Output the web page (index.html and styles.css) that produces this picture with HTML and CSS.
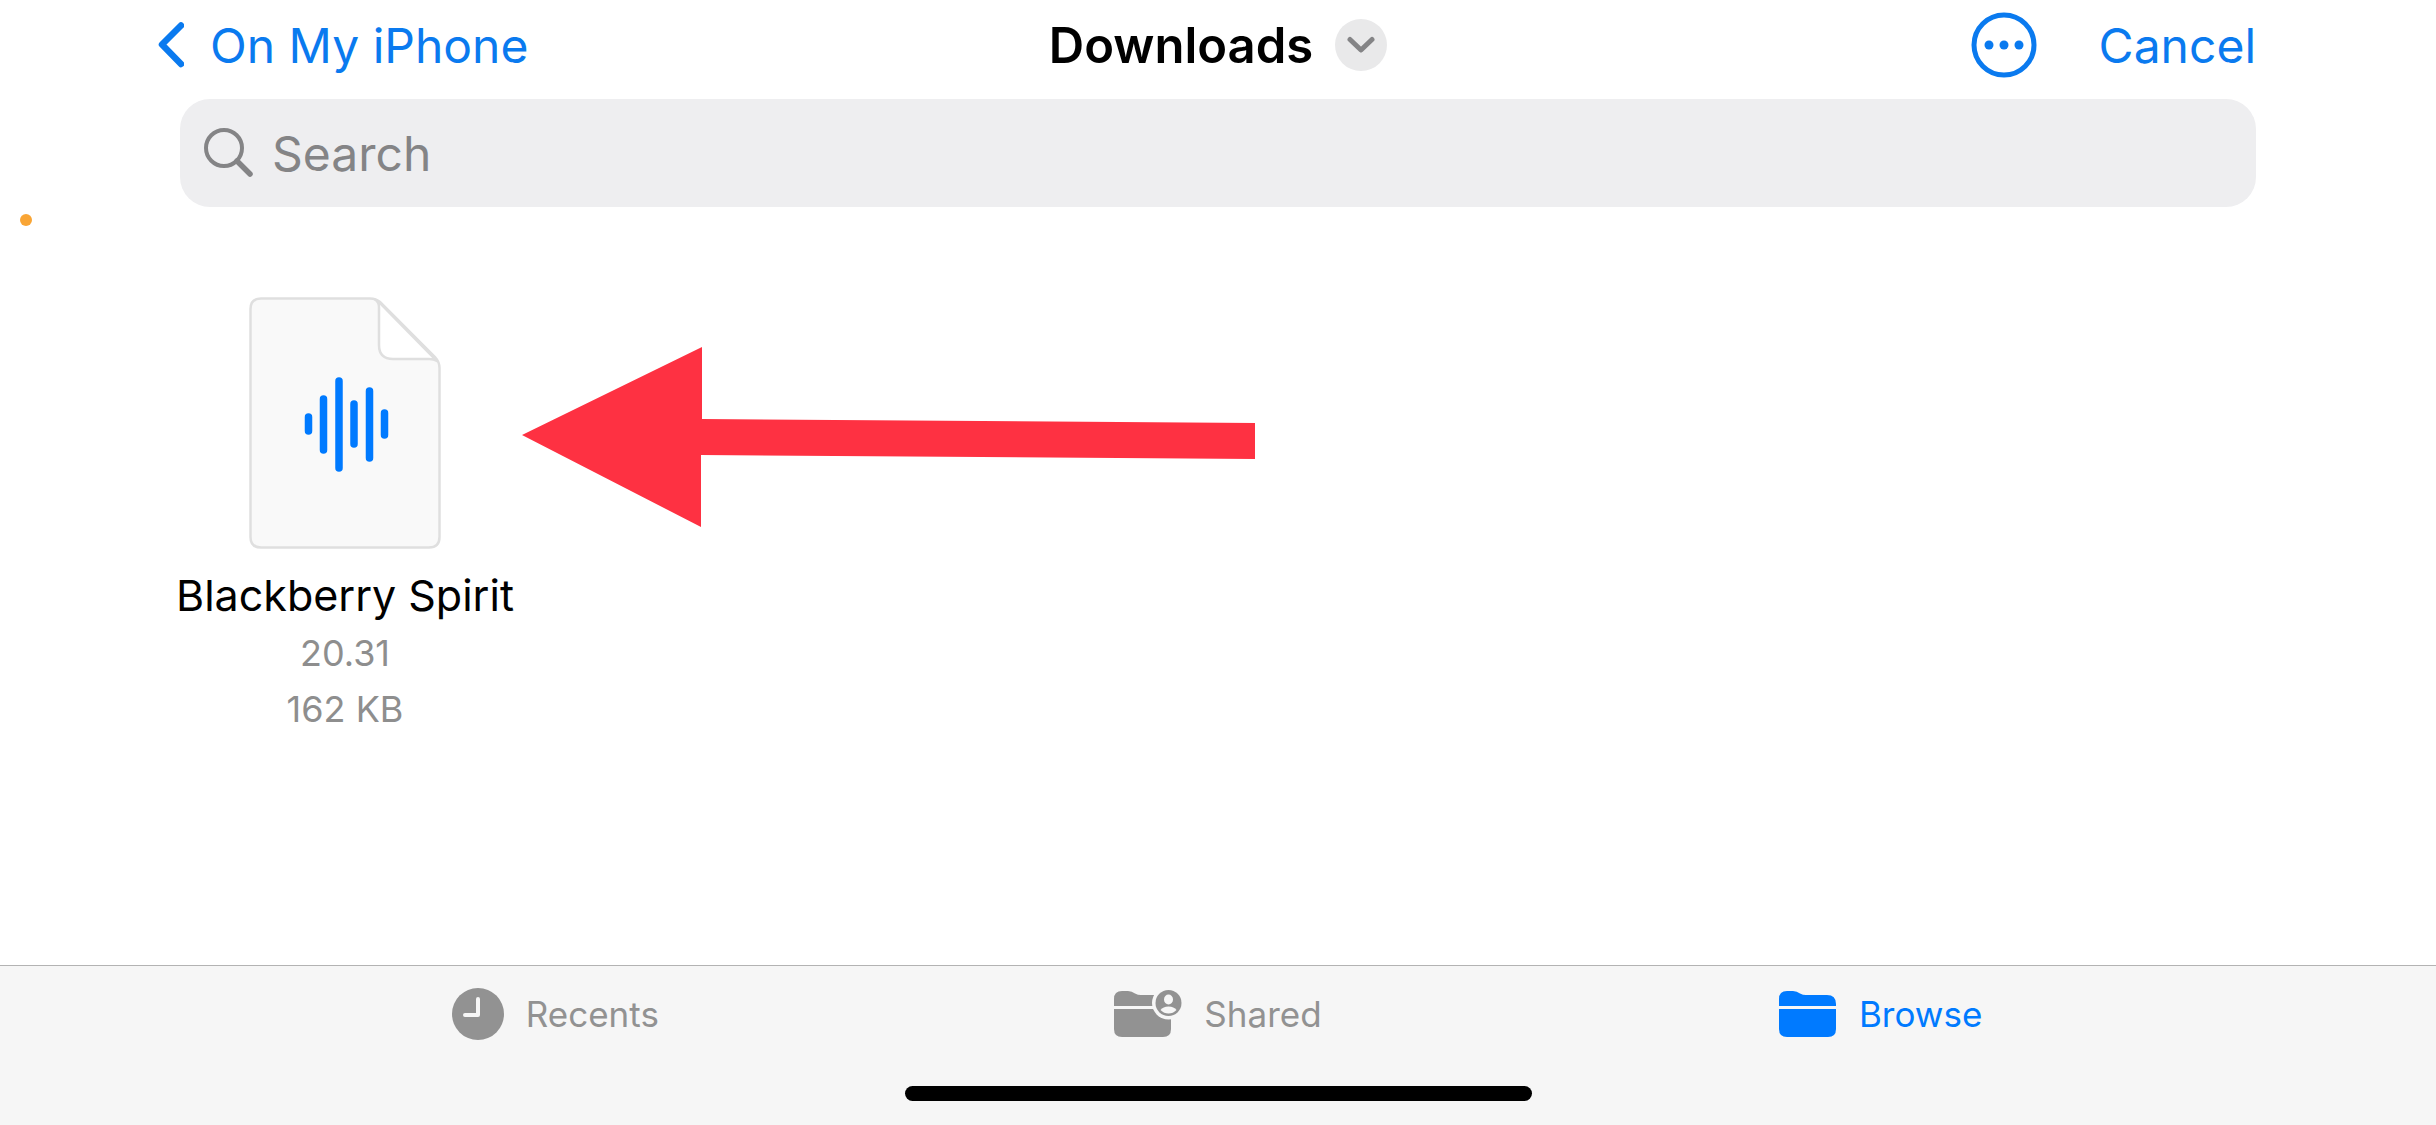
FILE: index.html
```html
<!DOCTYPE html>
<html lang="en">
<head>
    <meta charset="UTF-8">
    <meta name="viewport" content="width=device-width, initial-scale=1.0">
    <title>Downloads</title>
    <link rel="stylesheet" href="styles.css">
</head>
<body>
    <header class="nav-bar">
        <a class="back" href="#">
            <svg width="26" height="46" viewBox="0 0 26 46" aria-hidden="true">
                <path d="M23 3.500L4 22.500L23 42" fill="none" stroke="currentColor" stroke-width="6.500" stroke-linecap="round" stroke-linejoin="round"/>
            </svg>
            <span>On My iPhone</span>
        </a>
        <div class="title-group">
            <h1>Downloads</h1>
            <button class="title-menu" type="button" aria-label="Folder options">
                <svg width="28" height="18" viewBox="0 0 28 18" aria-hidden="true">
                    <path d="M3 3.500L14 14L25 3.500" fill="none" stroke="currentColor" stroke-width="5" stroke-linecap="round" stroke-linejoin="round"/>
                </svg>
            </button>
        </div>
        <div class="actions">
            <button class="more" type="button" aria-label="More">
                <svg width="66" height="66" viewBox="0 0 66 66" aria-hidden="true">
                    <circle cx="33" cy="33" r="30" fill="none" stroke="currentColor" stroke-width="5"/>
                    <circle cx="18" cy="33" r="4.500" fill="currentColor"/>
                    <circle cx="33" cy="33" r="4.500" fill="currentColor"/>
                    <circle cx="48" cy="33" r="4.500" fill="currentColor"/>
                </svg>
            </button>
            <button class="cancel" type="button">Cancel</button>
        </div>
    </header>

    <form class="search">
        <label for="search" aria-label="Search">
            <svg width="50" height="50" viewBox="0 0 50 50" aria-hidden="true">
                <circle cx="20" cy="20" r="18" fill="none" stroke="currentColor" stroke-width="4"/>
                <path d="M33 33L46 46" stroke="currentColor" stroke-width="5.500" stroke-linecap="round"/>
            </svg>
        </label>
        <input type="text" id="search" name="search" placeholder="Search">
    </form>

    <main class="files">
        <a class="file" href="#">
            <svg width="192" height="252" viewBox="0 0 192 252" aria-hidden="true">
                <path d="M12 1.500H121Q127 1.500 131 5L186 60Q190.500 65 190.500 71V240Q190.500 250.500 180 250.500H12Q1.500 250.500 1.500 240V12Q1.500 1.500 12 1.500Z" fill="#f9f9f9" stroke="#dfdfdf" stroke-width="2.500"/>
                <path d="M126 2.500Q130 5 130 10V48Q130 62 144 62H180Q185 62 188 64L131 6Z" fill="#fff" stroke="#dfdfdf" stroke-width="2.500" stroke-linejoin="round"/>
                <path d="M59.500 120V134M74.500 102V153M90 84V171M105 107V147M120.500 94V161M135.500 116V138" stroke="#007aff" stroke-width="7.500" stroke-linecap="round"/>
            </svg>
            <span class="file-name">Blackberry Spirit</span>
            <span class="file-meta">20.31</span>
            <span class="file-meta">162 KB</span>
        </a>
        <svg class="arrow" width="736" height="182" viewBox="0 0 736 182" aria-hidden="true">
            <path d="M2 89L182 1V73L735 77V113L181 109V181Z" fill="#fe3142"/>
        </svg>
    </main>

    <!-- Recording indicator -->
    <span class="mic-dot"></span>

    <footer class="tab-bar">
        <nav class="tabs">
            <a class="tab" href="#">
                <svg width="52" height="52" viewBox="0 0 52 52" aria-hidden="true">
                    <circle cx="26" cy="26" r="26" fill="currentColor"/>
                    <path d="M26 11V27H13" fill="none" stroke="#f6f6f6" stroke-width="4" stroke-linecap="round" stroke-linejoin="round"/>
                </svg>
                <span>Recents</span>
            </a>
            <a class="tab" href="#">
                <svg width="68" height="48" viewBox="0 0 68 48" aria-hidden="true">
                    <path d="M0 16V9Q0 1 8 1H14Q18 1 21 3.500Q24 5 27 5H48Q57 5 57 14V16Z" fill="currentColor"/>
                    <path d="M0 19H57V39Q57 47 49 47H8Q0 47 0 39Z" fill="currentColor"/>
                    <circle cx="54.500" cy="13" r="16.500" fill="#f6f6f6"/>
                    <circle cx="54.500" cy="13" r="13" fill="currentColor"/>
                    <ellipse cx="54.500" cy="9.500" rx="4.500" ry="5" fill="#f6f6f6"/>
                    <path d="M46.500 20Q49 16.500 54.500 16.500Q60 16.500 62.500 20Q59 23.500 54.500 23.500Q50 23.500 46.500 20Z" fill="#f6f6f6"/>
                </svg>
                <span>Shared</span>
            </a>
            <a class="tab active" href="#">
                <svg width="58" height="48" viewBox="0 0 58 48" aria-hidden="true">
                    <path d="M0 16V9Q0 1 8 1H14Q18 1 21 3.500Q24 5 27 5H48Q57 5 57 14V16Z" fill="currentColor"/>
                    <path d="M0 19H57V39Q57 47 49 47H8Q0 47 0 39Z" fill="currentColor"/>
                </svg>
                <span>Browse</span>
            </a>
        </nav>
        <div class="home-indicator"></div>
    </footer>
</body>
</html>
```

FILE: styles.css
```css
* {
    box-sizing: border-box;
}
body {
    display: flex;
    flex-direction: column;
    min-height: 100vh;
    margin: 0;
    position: relative;
    background-color: #fff;
    font-family: Inter, "Liberation Sans", sans-serif;
}
a {
    color: inherit;
    text-decoration: none;
}
button {
    padding: 0;
    border: none;
    background: none;
    color: inherit;
    font: inherit;
    cursor: pointer;
}
svg {
    display: block;
    flex: none;
}
.nav-bar {
    display: grid;
    grid-template-columns: 1fr auto 1fr;
    align-items: center;
    height: 90px;
    padding: 0 158px;
    color: #0a7aef;
    font-size: 48px;
}
.back {
    display: flex;
    align-items: center;
    gap: 26px;
}
.title-group {
    display: flex;
    align-items: center;
    gap: 22px;
}
h1 {
    margin: 0;
    color: #000;
    font-size: 49px;
    font-weight: 600;
}
.title-menu {
    display: flex;
    align-items: center;
    justify-content: center;
    width: 52px;
    height: 52px;
    border-radius: 50%;
    background-color: #e9e9ea;
    color: #848486;
}
.actions {
    display: flex;
    align-items: center;
    justify-content: flex-end;
    gap: 62px;
    padding-right: 22px;
}
.search {
    display: flex;
    align-items: center;
    gap: 18px;
    height: 108px;
    margin: 9px 180px 0;
    padding: 0 24px;
    border-radius: 30px;
    background-color: #eeeef0;
    color: #848486;
}
.search input {
    flex: 1;
    padding: 0;
    border: none;
    outline: none;
    background: none;
    color: #000;
    font-family: inherit;
    font-size: 48px;
}
.search input::placeholder {
    color: #848486;
    opacity: 1;
}
.files {
    flex: 1;
    position: relative;
    padding: 90px 173px;
}
.file {
    display: inline-flex;
    flex-direction: column;
    align-items: center;
    width: 344px;
    white-space: nowrap;
}
.file-name {
    margin-top: 16px;
    color: #000;
    font-size: 43px;
    line-height: 60px;
}
.file-meta {
    color: #8e8e8e;
    font-size: 36px;
    line-height: 56px;
}
.arrow {
    position: absolute;
    top: 139px;
    left: 520px;
}
.mic-dot {
    position: absolute;
    top: 214px;
    left: 20px;
    width: 12px;
    height: 12px;
    border-radius: 50%;
    background-color: #f9a535;
}
.tab-bar {
    border-top: 1px solid #b3b3b3;
    background-color: #f6f6f6;
}
.tabs {
    display: grid;
    grid-template-columns: repeat(3, 1fr);
    height: 95px;
    padding: 0 224px;
}
.tab {
    display: flex;
    align-items: center;
    justify-content: center;
    gap: 22px;
    color: #929292;
    font-size: 35px;
}
.tab.active {
    color: #007aff;
}
.home-indicator {
    width: 627px;
    height: 15px;
    margin: 25px auto 24px;
    border-radius: 8px;
    background-color: #000;
}
```
